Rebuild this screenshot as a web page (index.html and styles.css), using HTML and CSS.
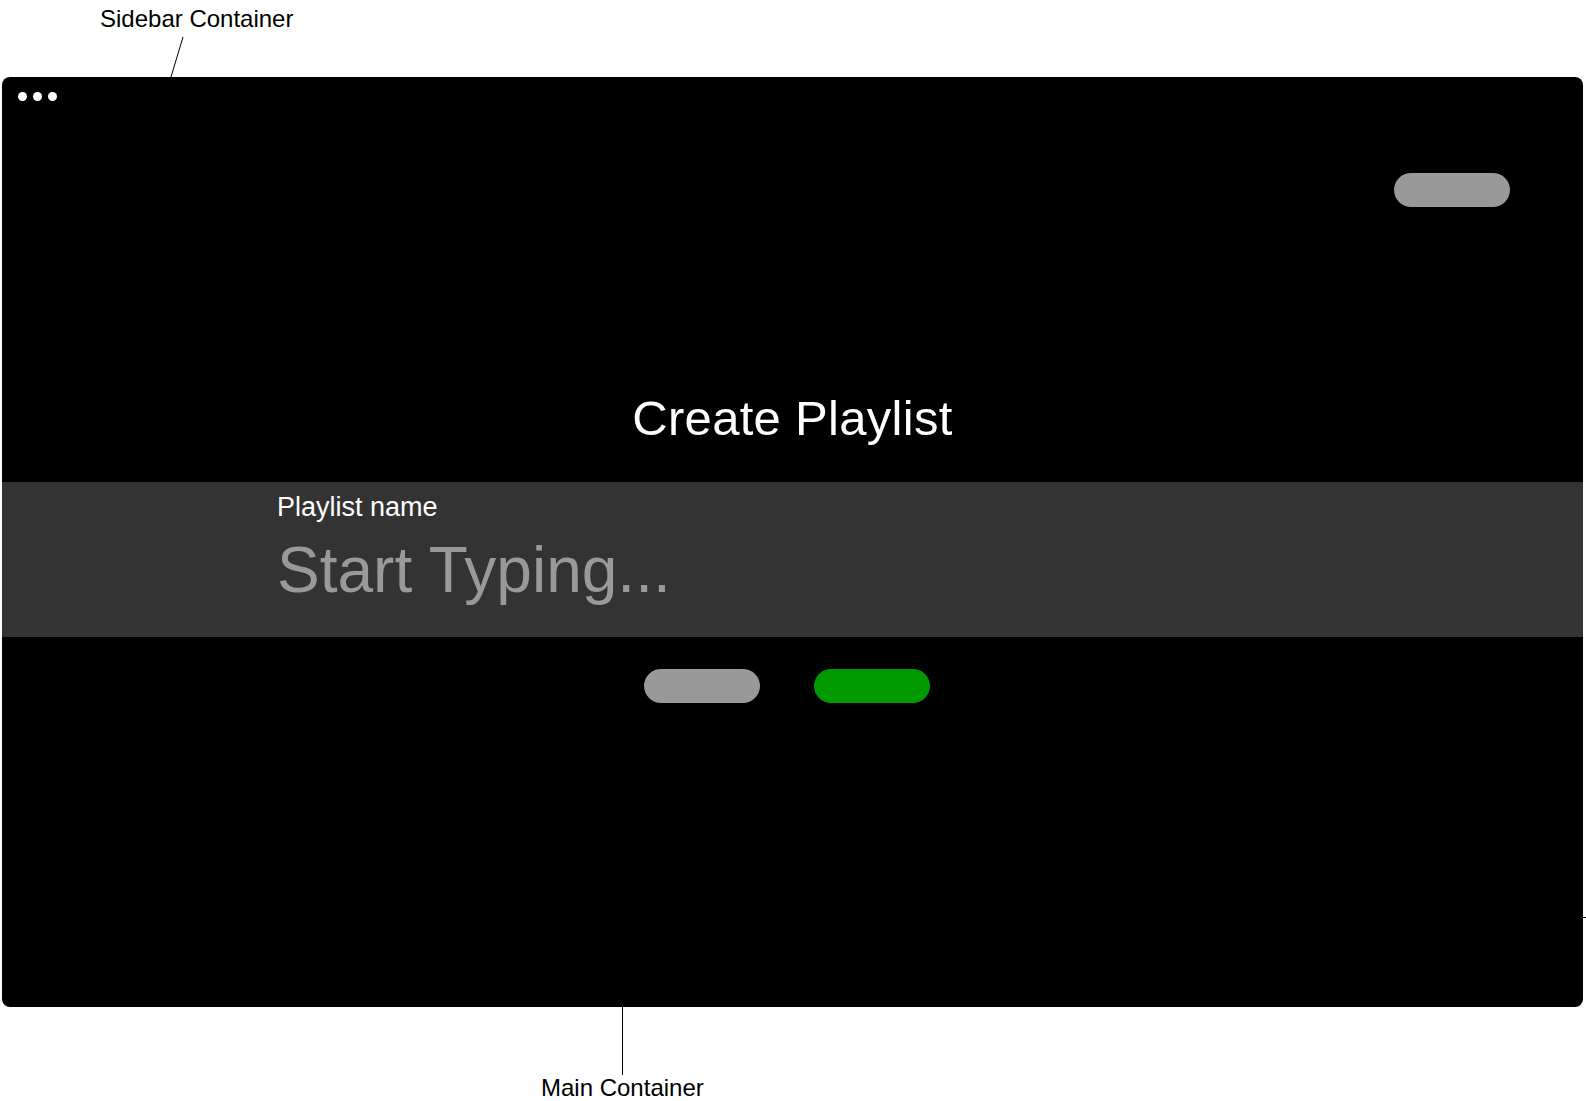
FILE: index.html
```html
<!DOCTYPE html>
<html lang="en">
<head>
<meta charset="utf-8">
<title>Create Playlist</title>
<link rel="stylesheet" href="styles.css">
</head>
<body>
<div class="page">
  <div class="panel">
    <div class="topbar">
      <span class="dot"></span><span class="dot"></span><span class="dot"></span>
    </div>
    <div class="top-actions">
      <span class="pill pill-gray"></span>
    </div>
    <h1 class="title">Create Playlist</h1>
    <div class="field">
      <div class="field-label">Playlist name</div>
      <div class="field-input">Start Typing...</div>
    </div>
    <div class="buttons">
      <span class="pill pill-gray"></span>
      <span class="pill pill-green"></span>
    </div>
  </div>
  <div class="note note-sidebar">Sidebar Container</div>
  <div class="note note-main">Main Container</div>
  <svg class="leaders" width="1586" height="1101" viewBox="0 0 1586 1101">
    <line x1="183" y1="37" x2="171" y2="77" stroke="#000" stroke-width="1"/>
    <line x1="622.5" y1="1007" x2="622.5" y2="1075" stroke="#000" stroke-width="1"/>
    <line x1="1583" y1="917.5" x2="1586" y2="917.5" stroke="#000" stroke-width="1"/>
  </svg>
</div>
</body>
</html>
```

FILE: styles.css
```css
html, body {
  margin: 0;
  padding: 0;
  background: #fff;
}
body {
  font-family: "Liberation Sans", Arial, Helvetica, sans-serif;
}
.page {
  position: relative;
  width: 1586px;
  height: 1101px;
  padding: 77px 0 0 2px;
  box-sizing: border-box;
  overflow: hidden;
}
.panel {
  width: 1581px;
  height: 930px;
  background: #000;
  border-radius: 8px;
  display: flex;
  flex-direction: column;
  overflow: hidden;
}
.topbar {
  display: flex;
  gap: 6px;
  padding: 15px 0 0 16px;
  height: 9px;
}
.dot {
  width: 9px;
  height: 9px;
  border-radius: 50%;
  background: #fff;
}
.top-actions {
  display: flex;
  justify-content: flex-end;
  padding-right: 73px;
  margin-top: 72px;
}
.pill {
  display: block;
  width: 116px;
  height: 34px;
  border-radius: 17px;
}
.pill-gray {
  background: #999999;
}
.pill-green {
  background: #009900;
}
.title {
  margin: 187px 0 0;
  font-size: 49px;
  line-height: 49px;
  font-weight: normal;
  color: #fff;
  text-align: center;
  letter-spacing: 0.3px;
}
.field {
  margin-top: 39px;
  height: 155px;
  box-sizing: border-box;
  background: #333333;
  padding: 12px 0 0 275px;
}
.field-label {
  font-size: 27px;
  line-height: 27px;
  color: #fff;
}
.field-input {
  margin-top: 17px;
  font-size: 64px;
  line-height: 64px;
  color: #999999;
}
.buttons {
  display: flex;
  justify-content: center;
  gap: 54px;
  margin-top: 32px;
  padding-right: 11px;
}
.note {
  position: absolute;
  font-size: 24px;
  line-height: 24px;
  color: #000;
  white-space: nowrap;
}
.note-sidebar {
  left: 100px;
  top: 7px;
}
.note-main {
  left: 541px;
  top: 1076px;
}
.leaders {
  position: absolute;
  left: 0;
  top: 0;
  pointer-events: none;
}
```
